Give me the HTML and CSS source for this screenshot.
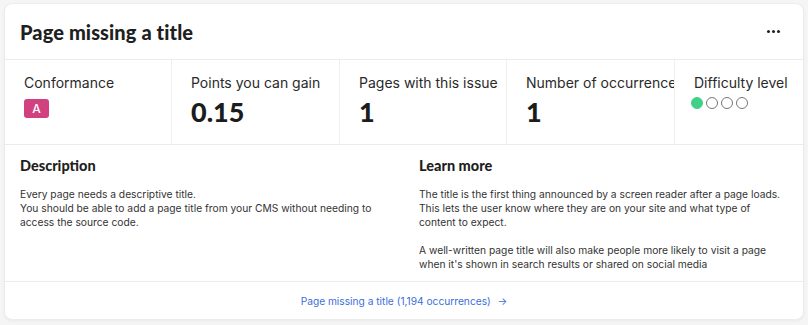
FILE: index.html
```html
<!DOCTYPE html>
<html lang="en">
<head>
    <meta charset="UTF-8">
    <title>Page missing a title</title>
    <link rel="stylesheet" href="styles.css">
</head>
<body>
    <div class="issue-card">
        <div class="issue-header">
            <h2>Page missing a title</h2>
            <button class="more-btn" aria-label="More options">
                <span></span><span></span><span></span>
            </button>
        </div>

        <div class="stats">
            <div class="stat">
                <div class="stat-label">Conformance</div>
                <span class="level-badge">A</span>
            </div>
            <div class="stat">
                <div class="stat-label">Points you can gain</div>
                <div class="stat-value">0.15</div>
            </div>
            <div class="stat">
                <div class="stat-label">Pages with this issue</div>
                <div class="stat-value">1</div>
            </div>
            <div class="stat">
                <div class="stat-label">Number of occurrences</div>
                <div class="stat-value">1</div>
            </div>
            <div class="stat">
                <div class="stat-label">Difficulty level</div>
                <div class="difficulty">
                    <span class="dot filled"></span>
                    <span class="dot"></span>
                    <span class="dot"></span>
                    <span class="dot"></span>
                </div>
            </div>
        </div>

        <div class="details">
            <div class="detail">
                <h3>Description</h3>
                <p>Every page needs a descriptive title.<br>
                You should be able to add a page title from your CMS without needing to access the source code.</p>
            </div>
            <div class="detail">
                <h3>Learn more</h3>
                <p>The title is the first thing announced by a screen reader after a page loads. This lets the user know where they are on your site and what type of content to expect.</p>
                <p>A well-written page title will also make people more likely to visit a page when it's shown in search results or shared on social media</p>
            </div>
        </div>

        <div class="issue-footer">
            <a href="#" class="occurrences-link">Page missing a title (1,194 occurrences) <span class="arrow">→</span></a>
        </div>
    </div>
</body>
</html>
```

FILE: styles.css
```css
* {
    margin: 0;
    padding: 0;
    box-sizing: border-box;
}

body {
    font-family: Inter, 'Noto Sans', sans-serif;
    background: #f5f5f6;
    color: #222;
    padding: 3px 4px 5px 4px;
}

.issue-card {
    background: #fff;
    border: 1px solid #ececec;
    border-radius: 8px;
    box-shadow: 0 1px 3px rgba(0,0,0,0.05);
    overflow: hidden;
}

.issue-header {
    height: 56px;
    display: flex;
    align-items: center;
    justify-content: space-between;
    padding: 0 23px 0 15px;
    border-bottom: 1px solid #ebebeb;
}

.issue-header h2 {
    font-family: Lato, sans-serif;
    font-weight: 900;
    font-size: 20px;
    color: #1f1f1f;
    letter-spacing: 0.1px;
    padding-top: 1px;
}

.more-btn {
    background: none;
    border: none;
    display: flex;
    gap: 2px;
    cursor: pointer;
    padding: 0;
}

.more-btn span {
    width: 3px;
    height: 3px;
    background: #222;
    border-radius: 50%;
}

.stats {
    display: grid;
    grid-template-columns: 167px 168px 167px 168px 1fr;
    height: 85px;
    border-bottom: 1px solid #ebebeb;
}

.stat {
    padding: 13px 0 0 19px;
    border-right: 1px solid #efefef;
    overflow: hidden;
    white-space: nowrap;
}

.stat:last-child {
    border-right: none;
}

.stat-label {
    font-size: 14px;
    color: #2a2a2a;
    line-height: 20px;
    margin-bottom: 4px;
}

.stat-value {
    font-family: Lato, sans-serif;
    font-weight: 900;
    font-size: 27px;
    line-height: 30px;
    color: #1c1c1c;
}

.level-badge {
    display: inline-block;
    width: 25px;
    height: 19px;
    margin-top: 1px;
    background: #d1407f;
    color: #fff;
    font-size: 12px;
    font-weight: 500;
    text-align: center;
    line-height: 19px;
    border-radius: 3px;
}

.difficulty {
    display: flex;
    gap: 3px;
    margin-left: -3px;
}

.dot {
    width: 12px;
    height: 12px;
    border-radius: 50%;
    border: 1px solid #777;
}

.dot.filled {
    background: #3fd186;
    border-color: #3fd186;
}

.details {
    display: grid;
    grid-template-columns: 1fr 1fr;
    height: 137px;
    border-bottom: 1px solid #ebebeb;
}

.detail {
    padding: 12px 14px 0 15px;
}

.detail h3 {
    font-family: Lato, sans-serif;
    font-weight: 900;
    font-size: 14.5px;
    color: #1f1f1f;
    margin-bottom: 13px;
}

.detail p {
    font-size: 10.25px;
    line-height: 14px;
    color: #333;
    margin-bottom: 14px;
}

.issue-footer {
    height: 37px;
    display: flex;
    align-items: center;
    justify-content: center;
}

.occurrences-link {
    font-size: 10.2px;
    color: #3a6fd8;
    text-decoration: none;
}

.arrow {
    margin-left: 4px;
}
```
